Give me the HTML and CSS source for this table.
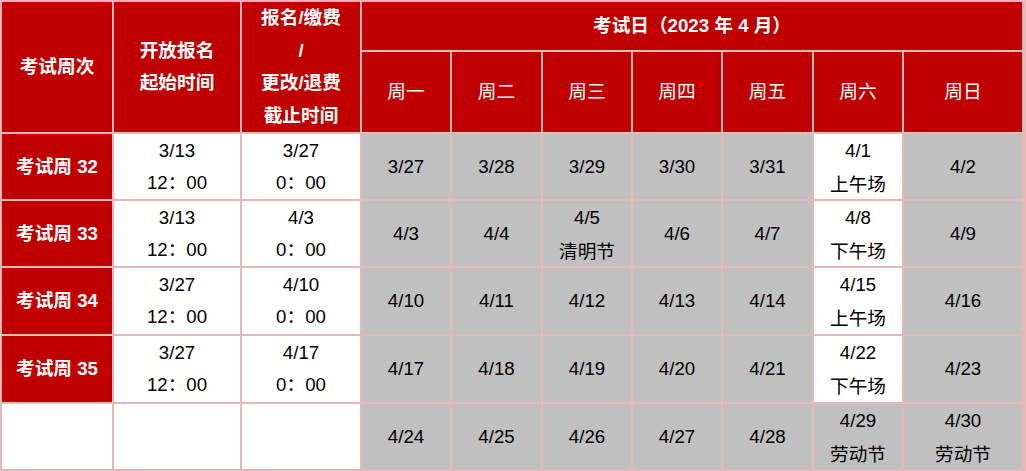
FILE: index.html
```html
<!DOCTYPE html>
<html lang="zh-CN">
<head>
<meta charset="utf-8">
<title>考试日历</title>
<link rel="stylesheet" href="styles.css">
</head>
<body>
<div class="grid">
  <div class="c h tall col1">考试周次</div>
  <div class="c h tall col2">开放报名<br>起始时间</div>
  <div class="c h tall col3 four">报名/缴费<br>/<br>更改/退费<br>截止时间</div>
  <div class="c h span7">考试日（2023 年 4 月）</div>
  <div class="c h wd">周一</div>
  <div class="c h wd">周二</div>
  <div class="c h wd">周三</div>
  <div class="c h wd">周四</div>
  <div class="c h wd">周五</div>
  <div class="c h wd">周六</div>
  <div class="c h wd">周日</div>

  <div class="c h">考试周 32</div>
  <div class="c w">3/13<br>12：00</div>
  <div class="c w">3/27<br>0：00</div>
  <div class="c g">3/27</div>
  <div class="c g">3/28</div>
  <div class="c g">3/29</div>
  <div class="c g">3/30</div>
  <div class="c g">3/31</div>
  <div class="c w">4/1<br><span class="zh">上午场</span></div>
  <div class="c g">4/2</div>

  <div class="c h">考试周 33</div>
  <div class="c w">3/13<br>12：00</div>
  <div class="c w">4/3<br>0：00</div>
  <div class="c g">4/3</div>
  <div class="c g">4/4</div>
  <div class="c g">4/5<br><span class="zh">清明节</span></div>
  <div class="c g">4/6</div>
  <div class="c g">4/7</div>
  <div class="c w">4/8<br><span class="zh">下午场</span></div>
  <div class="c g">4/9</div>

  <div class="c h">考试周 34</div>
  <div class="c w">3/27<br>12：00</div>
  <div class="c w">4/10<br>0：00</div>
  <div class="c g">4/10</div>
  <div class="c g">4/11</div>
  <div class="c g">4/12</div>
  <div class="c g">4/13</div>
  <div class="c g">4/14</div>
  <div class="c w">4/15<br><span class="zh">上午场</span></div>
  <div class="c g">4/16</div>

  <div class="c h">考试周 35</div>
  <div class="c w">3/27<br>12：00</div>
  <div class="c w">4/17<br>0：00</div>
  <div class="c g">4/17</div>
  <div class="c g">4/18</div>
  <div class="c g">4/19</div>
  <div class="c g">4/20</div>
  <div class="c g">4/21</div>
  <div class="c w">4/22<br><span class="zh">下午场</span></div>
  <div class="c g">4/23</div>

  <div class="c w"></div>
  <div class="c w"></div>
  <div class="c w"></div>
  <div class="c g">4/24</div>
  <div class="c g">4/25</div>
  <div class="c g">4/26</div>
  <div class="c g">4/27</div>
  <div class="c g">4/28</div>
  <div class="c g">4/29<br><span class="zh">劳动节</span></div>
  <div class="c g">4/30<br><span class="zh">劳动节</span></div>
</div>
</body>
</html>
```

FILE: styles.css
```css
html, body {
  margin: 0;
  padding: 0;
  background: #e6b8b7;
}
body {
  width: 1026px;
  height: 471px;
  overflow: hidden;
}
.grid {
  display: grid;
  grid-template-columns: 110px 126px 118px 88px 89px 88px 88px 89px 88px 118px;
  grid-template-rows: 48px 80px 65px 65px 66px 66px 65px;
  gap: 2px;
  padding: 2px;
  width: 1020px;
  background: #e6b8b7;
  font-family: "Liberation Sans", "Noto Sans CJK SC", sans-serif;
  font-size: 18.67px;
  color: #000;
}
.c {
  display: flex;
  flex-direction: column;
  align-items: center;
  justify-content: center;
  text-align: center;
  line-height: 32px;
  white-space: nowrap;
}
.h {
  background: #c00000;
  color: #fff;
  font-weight: bold;
}
.wd {
  font-weight: normal;
}
.tall {
  grid-row: span 2;
}
.four {
  line-height: 32.5px;
}
.span7 {
  grid-column: span 7;
}
.w {
  background: #ffffff;
}
.g {
  background: #c0c0c0;
}
.zh {
  font-family: "Noto Sans CJK SC", sans-serif;
}
```
